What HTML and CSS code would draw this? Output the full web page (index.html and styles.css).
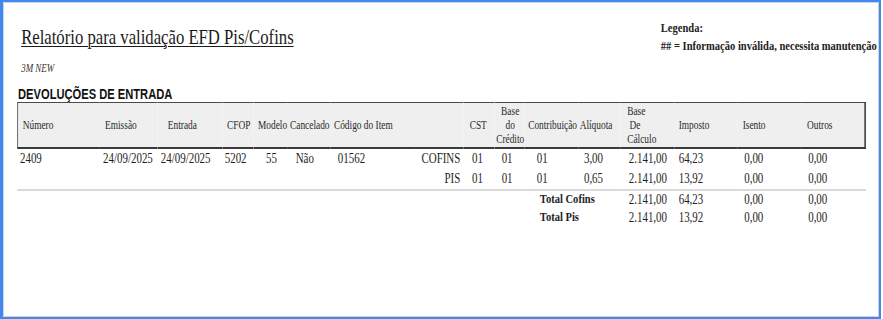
FILE: index.html
```html
<!DOCTYPE html>
<html lang="pt-BR">
<head>
<meta charset="utf-8">
<title>Relatório para validação EFD Pis/Cofins</title>
<link rel="stylesheet" href="styles.css">
</head>
<body>
<div class="frame">
  <div class="report">
    <div class="top">
      <div class="title-block">
        <h1 class="title">Relatório para validação EFD Pis/Cofins</h1>
        <p class="company">3M NEW</p>
        <h2 class="section">DEVOLUÇÕES DE ENTRADA</h2>
      </div>
      <div class="legend">
        <div>Legenda:</div>
        <div>## = Informação inválida, necessita manutenção</div>
      </div>
    </div>
    <table class="grid">
      <colgroup>
        <col class="w1"><col class="w2"><col class="w3"><col class="w4">
        <col class="w5"><col class="w6"><col class="w7"><col class="w8">
        <col class="w9"><col class="w10"><col class="w11"><col class="w12">
        <col class="w13"><col class="w14"><col class="w15"><col class="w16">
      </colgroup>
      <thead>
        <tr>
          <th class="c1">Número</th>
          <th class="c2">Emissão</th>
          <th class="c3">Entrada</th>
          <th class="c4">CFOP</th>
          <th class="c5">Modelo</th>
          <th class="c6">Cancelado</th>
          <th class="c7">Código do Item</th>
          <th class="c8"></th>
          <th class="c9">CST</th>
          <th class="c10">Base<br>do<br>Crédito</th>
          <th class="c11">Contribuição</th>
          <th class="c12">Alíquota</th>
          <th class="c13">Base<br>&nbsp;De<br>Cálculo</th>
          <th class="c14">Imposto</th>
          <th class="c15">Isento</th>
          <th class="c16">Outros</th>
        </tr>
      </thead>
      <tbody>
        <tr>
          <td class="c1">2409</td>
          <td class="c2">24/09/2025</td>
          <td class="c3">24/09/2025</td>
          <td class="c4">5202</td>
          <td class="c5">55</td>
          <td class="c6">Não</td>
          <td class="c7">01562</td>
          <td class="c8">COFINS</td>
          <td class="c9">01</td>
          <td class="c10">01</td>
          <td class="c11">01</td>
          <td class="c12">3,00</td>
          <td class="c13">2.141,00</td>
          <td class="c14">64,23</td>
          <td class="c15">0,00</td>
          <td class="c16">0,00</td>
        </tr>
        <tr>
          <td class="c1"></td>
          <td class="c2"></td>
          <td class="c3"></td>
          <td class="c4"></td>
          <td class="c5"></td>
          <td class="c6"></td>
          <td class="c7"></td>
          <td class="c8">PIS</td>
          <td class="c9">01</td>
          <td class="c10">01</td>
          <td class="c11">01</td>
          <td class="c12">0,65</td>
          <td class="c13">2.141,00</td>
          <td class="c14">13,92</td>
          <td class="c15">0,00</td>
          <td class="c16">0,00</td>
        </tr>
        <tr class="total first">
          <td colspan="10"></td>
          <td colspan="2" class="label">Total Cofins</td>
          <td class="c13">2.141,00</td>
          <td class="c14">64,23</td>
          <td class="c15">0,00</td>
          <td class="c16">0,00</td>
        </tr>
        <tr class="total">
          <td colspan="10"></td>
          <td colspan="2" class="label">Total Pis</td>
          <td class="c13">2.141,00</td>
          <td class="c14">13,92</td>
          <td class="c15">0,00</td>
          <td class="c16">0,00</td>
        </tr>
      </tbody>
    </table>
  </div>
</div>
</body>
</html>
```

FILE: styles.css
```css
html, body {
  margin: 0;
  padding: 0;
  background: #ffffff;
}

.frame {
  box-sizing: border-box;
  width: 881px;
  height: 319px;
  border-style: solid;
  border-color: #4189f2;
  border-width: 2px 2px 2px 3px;
  box-shadow: inset 0 0 0 1px #cfd3d8;
  padding-left: 1px;
  overflow: hidden;
  background: #ffffff;
}

.report {
  width: 1119px;
  transform: scaleX(0.78);
  transform-origin: 0 0;
  font-family: "Liberation Serif", "Times New Roman", serif;
  color: #1e1e1e;
}

.top {
  display: flex;
  justify-content: space-between;
  align-items: flex-start;
}

.title {
  margin: 23px 0 0 22px;
  font-size: 21.4px;
  font-weight: normal;
  line-height: 24px;
  text-decoration: underline;
  text-decoration-thickness: 1px;
  text-underline-offset: 2px;
  color: #1a1a1a;
}

.company {
  margin: 12px 0 0 22px;
  font-size: 11.5px;
  font-style: italic;
  line-height: 14px;
  color: #333333;
}

.section {
  margin: 11px 0 0 18px;
  font-family: "Liberation Sans", Arial, sans-serif;
  font-size: 14.3px;
  font-weight: bold;
  line-height: 16px;
  color: #111111;
}

.legend {
  margin-top: 17px;
  font-size: 13.5px;
  font-weight: bold;
  line-height: 18px;
  white-space: nowrap;
  color: #222222;
}

.grid {
  margin-left: 17px;
  width: 1088px;
  table-layout: fixed;
  border-collapse: separate;
  border-spacing: 0;
}

.w1 { width: 105px; }
.w2 { width: 75px; }
.w3 { width: 83px; }
.w4 { width: 40px; }
.w5 { width: 44px; }
.w6 { width: 55px; }
.w7 { width: 108px; }
.w8 { width: 62px; }
.w9 { width: 40px; }
.w10 { width: 38px; }
.w11 { width: 70px; }
.w12 { width: 53px; }
.w13 { width: 70px; }
.w14 { width: 80px; }
.w15 { width: 82px; }
.w16 { width: 83px; }

.grid th {
  background: #efefef;
  border-top: 1px solid #4a4a4a;
  border-bottom: 2px solid #3a3a3a;
  padding: 1px 0 1px 0;
  height: 42px;
  font-size: 12px;
  font-weight: normal;
  line-height: 14px;
  text-align: left;
  vertical-align: middle;
  white-space: nowrap;
  overflow: visible;
  color: #2a2a2a;
}

.grid th.c1 { border-left: 1px solid #4a4a4a; padding-left: 6px; }
.grid th.c2 { padding-left: 7.5px; }
.grid th.c3 { padding-left: 13px; }
.grid th.c4 { padding-left: 6px; }
.grid th.c5 { padding-left: 5.6px; }
.grid th.c6 { padding-left: 2.7px; }
.grid th.c7 { padding-left: 4px; }
.grid th.c9 { padding-left: 8px; }
.grid th.c10 { text-align: center; padding-left: 2px; }
.grid th.c11 { padding-left: 5px; }
.grid th.c12 { padding-left: 1px; }
.grid th.c13 { padding-left: 9px; }
.grid th.c14 { padding-left: 5px; }
.grid th.c15 { padding-left: 7px; }
.grid th.c16 { padding-left: 7.5px; border-right: 2px solid #3a3a3a; }

.grid td {
  height: 20px;
  padding: 0;
  font-size: 14px;
  line-height: 20px;
  white-space: nowrap;
  vertical-align: middle;
  color: #1e1e1e;
}

.grid td.c1 { padding-left: 3.5px; }
.grid td.c2 { padding-left: 5px; }
.grid td.c3 { padding-left: 4px; }
.grid td.c4 { padding-left: 3px; }
.grid td.c5 { padding-left: 16px; }
.grid td.c6 { padding-left: 10px; }
.grid td.c7 { padding-left: 9px; }
.grid td.c8 { text-align: right; padding-right: 4px; }
.grid td.c9 { padding-left: 11px; }
.grid td.c10 { padding-left: 9px; }
.grid td.c11 { padding-left: 16px; }
.grid td.c12 { text-align: right; padding-right: 22px; }
.grid td.c13 { padding-left: 11px; }
.grid td.c14 { padding-left: 5px; }
.grid td.c15 { padding-left: 9px; }
.grid td.c16 { padding-left: 9px; }

.grid .total td {
  height: 18px;
  line-height: 18px;
}

.grid .total.first td {
  border-top: 2px solid #d9d9d9;
}

.grid .total td.label {
  padding-left: 20px;
  font-size: 13.5px;
  font-weight: bold;
  line-height: 16px;
  vertical-align: top;
}
```
